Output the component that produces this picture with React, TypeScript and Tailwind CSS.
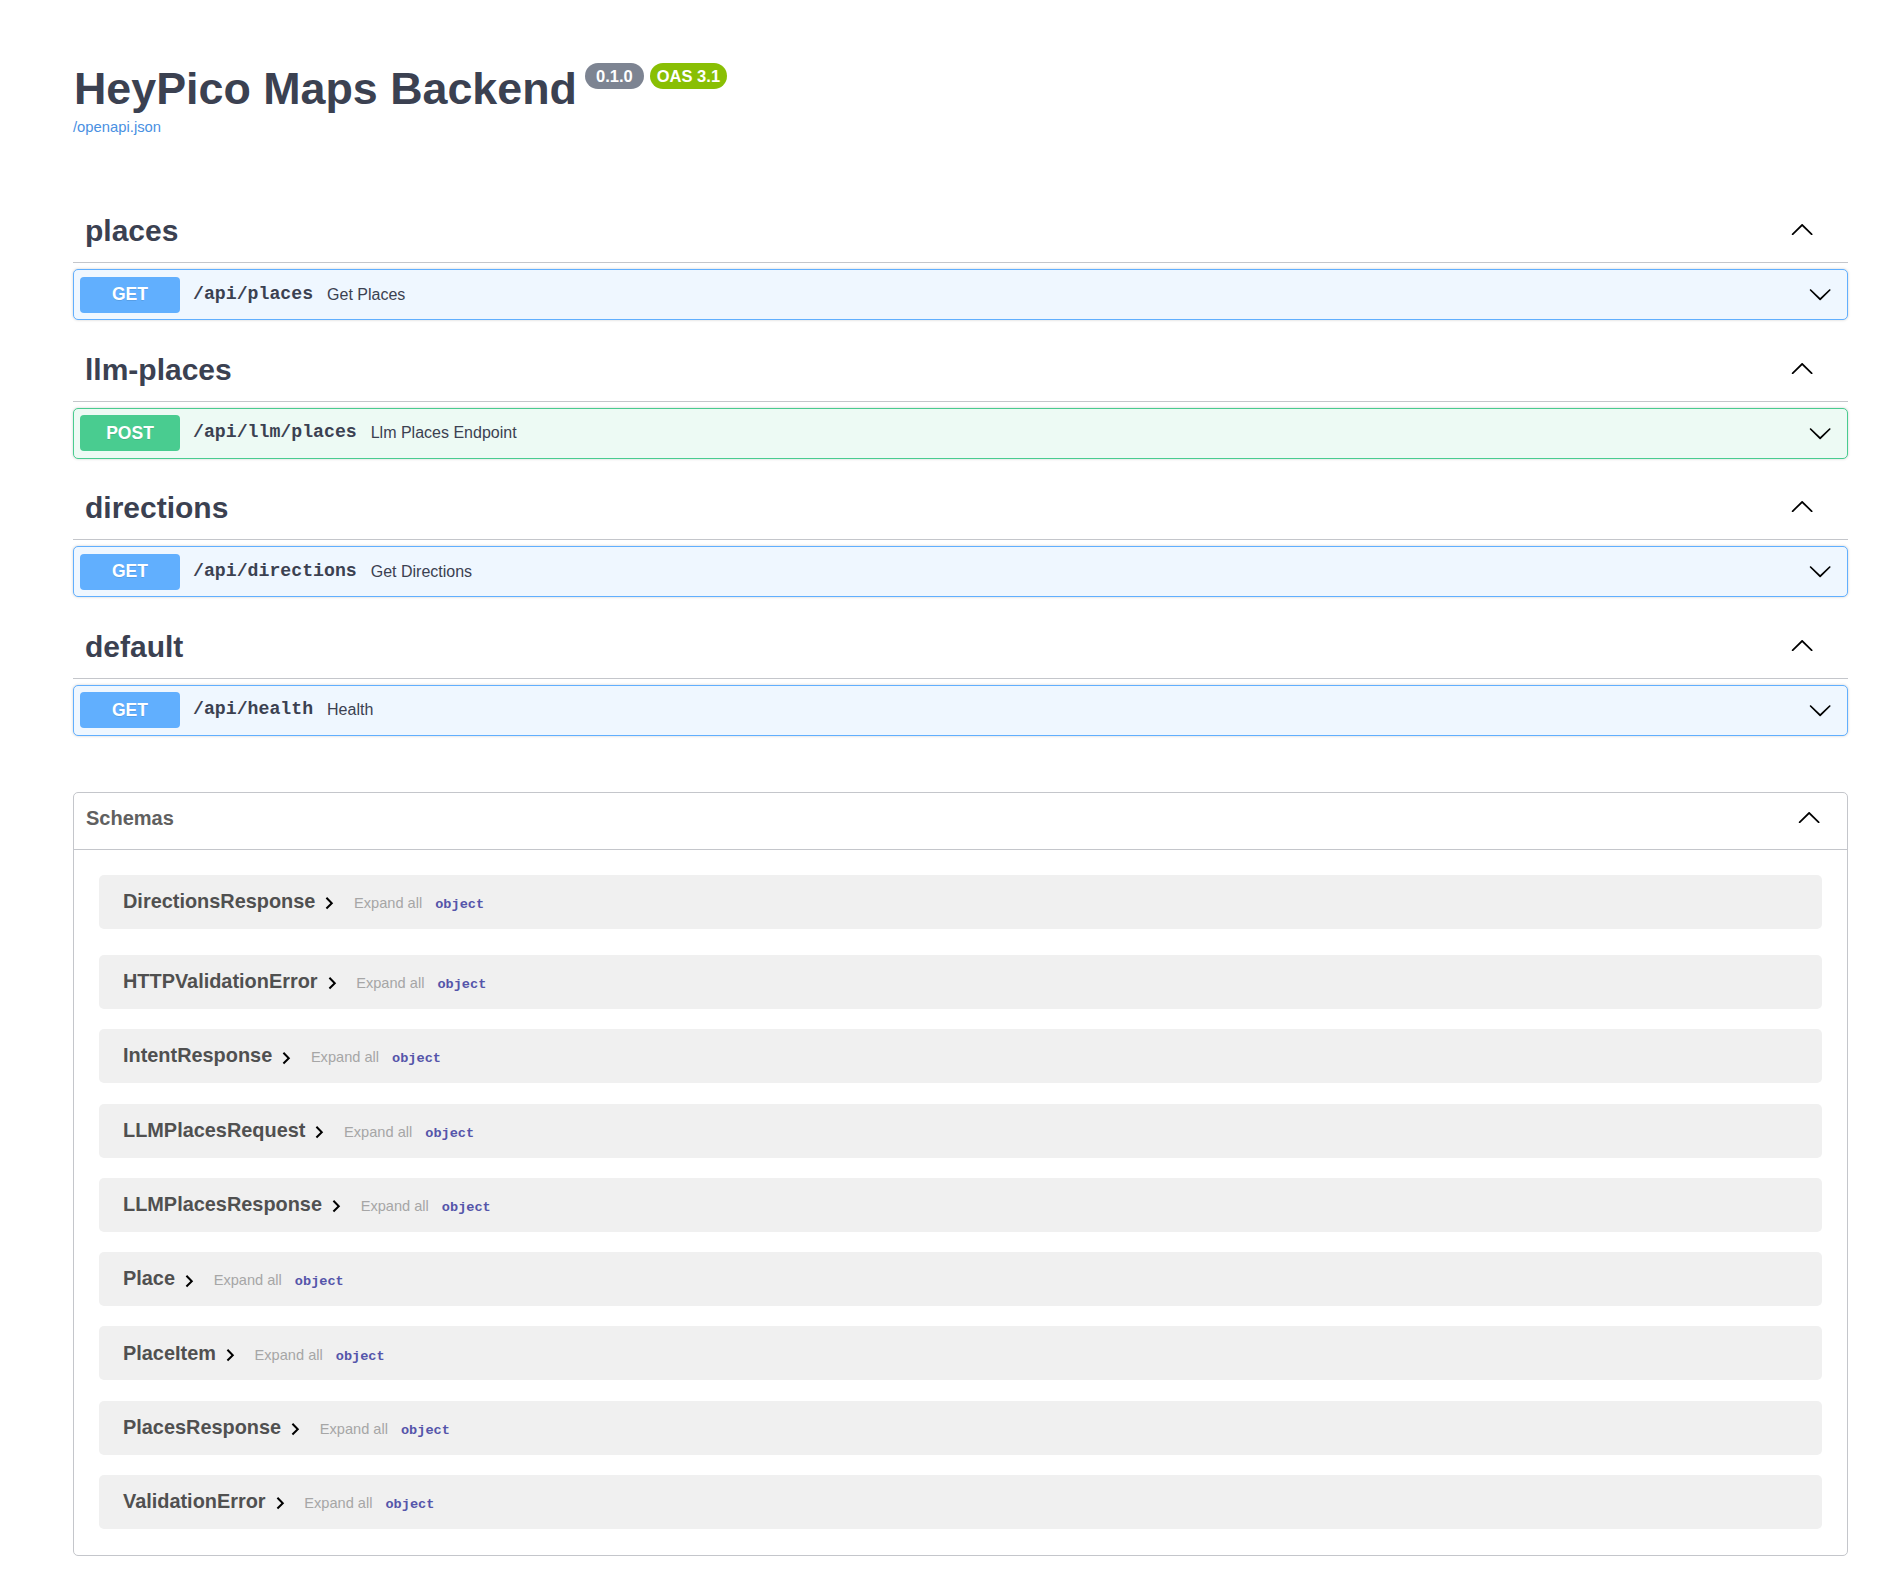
import React from "react";

const ARROW =
  "M17.418 6.109c.272-.268.709-.268.979 0s.271.701 0 .969l-7.908 7.83c-.27.268-.707.268-.979 0l-7.908-7.83c-.27-.268-.27-.701 0-.969.271-.268.709-.268.979 0L10 13.25l7.418-7.141z";

function Arrow({ up, className = "" }: { up?: boolean; className?: string }) {
  return (
    <svg viewBox="0 0 20 20" className={"block shrink-0 w-[24.3px] h-[24.3px] " + className}>
      <path d={ARROW} fill="#000" transform={up ? "rotate(180 10 10)" : undefined} />
    </svg>
  );
}

type Op = { tag: string; method: "GET" | "POST"; path: string; desc: string };

const ops: Op[] = [
  { tag: "places", method: "GET", path: "/api/places", desc: "Get Places" },
  { tag: "llm-places", method: "POST", path: "/api/llm/places", desc: "Llm Places Endpoint" },
  { tag: "directions", method: "GET", path: "/api/directions", desc: "Get Directions" },
  { tag: "default", method: "GET", path: "/api/health", desc: "Health" },
];

const schemas = [
  "DirectionsResponse",
  "HTTPValidationError",
  "IntentResponse",
  "LLMPlacesRequest",
  "LLMPlacesResponse",
  "Place",
  "PlaceItem",
  "PlacesResponse",
  "ValidationError",
];

function TagSection({ op }: { op: Op }) {
  const isGet = op.method === "GET";
  return (
    <div className="flex flex-col mb-[17.5px]">
      <div className="h-[64px] flex items-start pl-[12px] pt-[12px] pr-[33.5px] border-b border-[#c4c6cb]">
        <h3 className="text-[30px] leading-[39px] font-bold text-[#3b4151]">{op.tag}</h3>
        <Arrow up className="ml-auto mt-[7px]" />
      </div>
      <div
        className={
          "mt-[6px] h-[51px] rounded-[5px] border flex items-center pl-[6px] shadow-[0_0_3px_rgba(0,0,0,0.19)] " +
          (isGet ? "border-[#61affe] bg-[#eff7ff]" : "border-[#49cc90] bg-[#edfaf4]")
        }
      >
        <span
          className={
            "w-[100px] h-[36px] rounded-[4px] flex items-center justify-center text-white font-bold text-[17.5px] [text-shadow:0_1px_0_rgba(0,0,0,0.1)] " +
            (isGet ? "bg-[#61affe]" : "bg-[#49cc90]")
          }
        >
          {op.method}
        </span>
        <span className="ml-[13px] font-['Liberation_Mono',monospace] font-bold text-[18.2px] text-[#3b4151]">
          {op.path}
        </span>
        <span className="ml-[14px] text-[16px] text-[#3b4151]">{op.desc}</span>
        <Arrow className="ml-auto mr-[14.5px]" />
      </div>
    </div>
  );
}

function SchemaRow({ name, first }: { name: string; first?: boolean }) {
  return (
    <div
      className={
        "h-[54px] mx-[25px] rounded-[5px] bg-[#f0f0f0] flex items-center pl-[24px] " +
        (first ? "mb-[26px]" : "mb-[20.3px] last:mb-0")
      }
    >
      <div className="flex items-baseline">
        <span className="text-[19.9px] font-bold text-[#505050]">{name}</span>
        <svg viewBox="0 0 24 24" className="self-center block shrink-0 w-[24.3px] h-[24.3px] ml-[2px] mt-[3px]">
          <path d="M10 6 8.59 7.41 13.17 12l-4.58 4.59L10 18l6-6z" fill="#000" />
        </svg>
        <span className="ml-[12.4px] text-[14.6px] text-[#a6a6a6]">Expand all</span>
        <span className="ml-[13px] font-['Liberation_Mono',monospace] font-bold text-[13.6px] text-[#55a]">
          object
        </span>
      </div>
    </div>
  );
}

export default function App() {
  return (
    <div className="min-h-[1594px] bg-white font-['Liberation_Sans',Arial,sans-serif] text-[#3b4151]">
      <div className="ml-[73px] w-[1775px] pt-[63px] flex flex-col">
        <div className="flex items-start">
          <h2 className="text-[44.8px] leading-[50px] font-bold text-[#3b4151] pl-[1px]">HeyPico Maps Backend</h2>
          <span className="ml-[8px] w-[59px] h-[26px] rounded-full bg-[#7d8492] text-white font-bold text-[16.5px] flex items-center justify-center">
            0.1.0
          </span>
          <span className="ml-[6px] w-[77px] h-[26px] rounded-full bg-[#89bf04] text-white font-bold text-[16.5px] flex items-center justify-center">
            OAS 3.1
          </span>
        </div>
        <a className="block mt-[6px] leading-[17px] text-[14.8px] text-[#4990e2]">/openapi.json</a>

        <div className="mt-[63px] flex flex-col">
          {ops.map((op) => (
            <TagSection key={op.tag} op={op} />
          ))}
        </div>

        <div className="mt-[39px] border border-[#c4c6cb] rounded-[5px]">
          <div className="h-[57px] flex items-start pt-[10px] pl-[12px] pr-[25.5px] border-b border-[#c4c6cb]">
            <h4 className="text-[20px] font-bold text-[#606060]">Schemas</h4>
            <Arrow up className="ml-auto mt-[3px]" />
          </div>
          <div className="pt-[25px] pb-[26px]">
            {schemas.map((s, i) => (
              <SchemaRow key={s} name={s} first={i === 0} />
            ))}
          </div>
        </div>
      </div>
    </div>
  );
}
